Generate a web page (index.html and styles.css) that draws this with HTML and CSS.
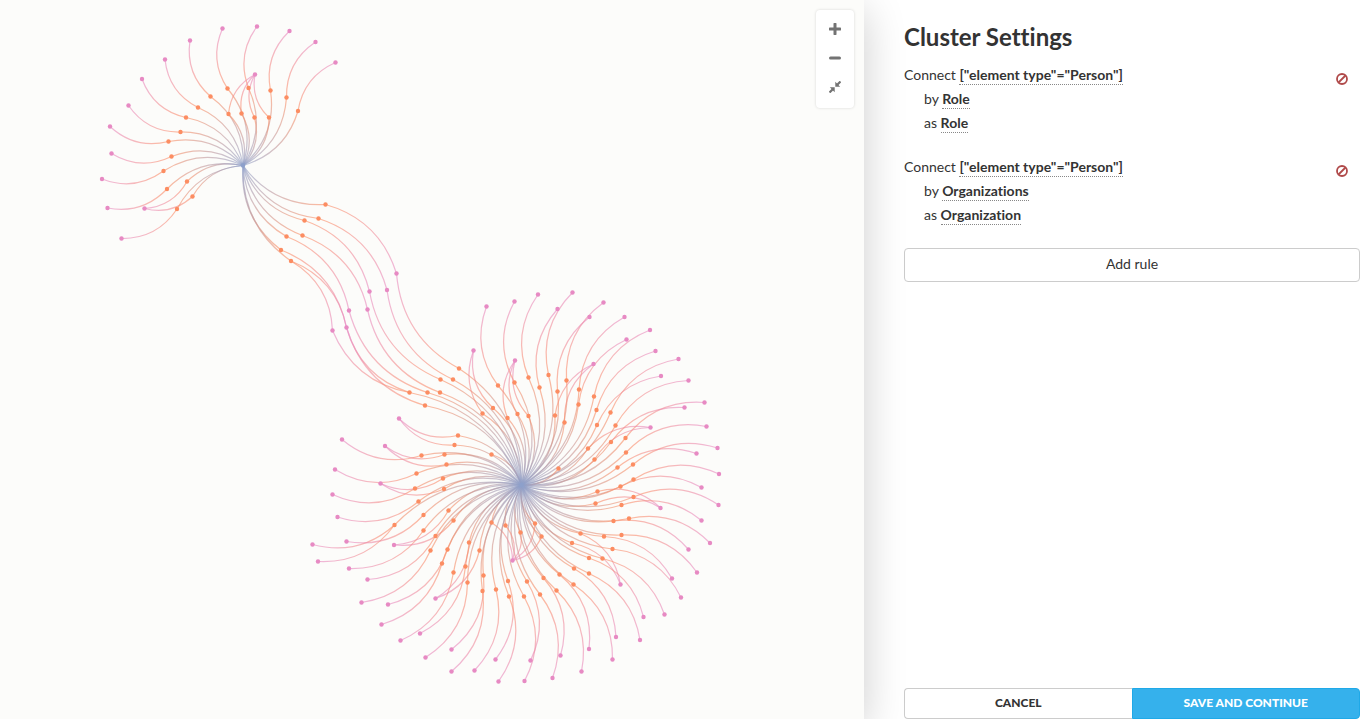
FILE: index.html
```html
<!DOCTYPE html>
<html lang="en">
<head>
<meta charset="utf-8">
<title>Cluster Settings</title>
<link rel="stylesheet" href="styles.css">
</head>
<body>
<main class="map">
  <svg class="graph" id="graph" role="img" aria-label="Relationship map"></svg>
  <div class="zoom-bar">
    <button class="zoom-button" type="button" aria-label="Zoom in">
      <svg viewBox="0 0 12 12" width="12" height="12"><path d="M6 1v10M1 6h10" stroke="currentColor" stroke-width="3" stroke-linecap="round"/></svg>
    </button>
    <button class="zoom-button" type="button" aria-label="Zoom out">
      <svg viewBox="0 0 12 12" width="12" height="12"><path d="M1.500 6h9" stroke="currentColor" stroke-width="3" stroke-linecap="round"/></svg>
    </button>
    <button class="zoom-button" type="button" aria-label="Fit to screen">
      <svg viewBox="0 0 12 12" width="12" height="12"><path d="M.5 11.500 4 8M11.500.5 8 4" stroke="currentColor" stroke-width="2.200"/><path d="M.8 6.300h4.900v4.900zM6.300.8v4.900h4.900z" fill="currentColor"/></svg>
    </button>
  </div>
</main>
<aside class="panel">
  <h1 class="title">Cluster Settings</h1>
  <section class="rule">
    <div class="rule-text">
      <p class="line">Connect <a class="value" href="#">["element type"=<wbr>"Person"]</a></p>
      <p class="line line-indent">by <a class="value" href="#">Role</a></p>
      <p class="line line-indent">as <a class="value" href="#">Role</a></p>
    </div>
    <button class="remove" type="button" aria-label="Remove rule">
      <svg viewBox="0 0 12 12" width="12" height="12" fill="none" stroke="currentColor" stroke-width="1.800"><circle cx="6" cy="6" r="5"/><path d="M2.500 9.500l7-7"/></svg>
    </button>
  </section>
  <section class="rule">
    <div class="rule-text">
      <p class="line">Connect <a class="value" href="#">["element type"=<wbr>"Person"]</a></p>
      <p class="line line-indent">by <a class="value" href="#">Organizations</a></p>
      <p class="line line-indent">as <a class="value" href="#">Organization</a></p>
    </div>
    <button class="remove" type="button" aria-label="Remove rule">
      <svg viewBox="0 0 12 12" width="12" height="12" fill="none" stroke="currentColor" stroke-width="1.800"><circle cx="6" cy="6" r="5"/><path d="M2.500 9.500l7-7"/></svg>
    </button>
  </section>
  <button class="add" type="button">Add rule</button>
  <div class="actions">
    <button class="action" type="button">CANCEL</button>
    <button class="action action-primary" type="button">SAVE AND CONTINUE</button>
  </div>
</aside>
<script src="graph.js"></script>
</body>
</html>
```
FILE: styles.css
```css
* {
  box-sizing: border-box;
}

body {
  margin: 0;
  display: flex;
  height: 100vh;
  overflow: hidden;
  background: #fff;
  color: #333;
  font-family: Lato, "Liberation Sans", sans-serif;
  font-size: 14px;
  font-variant-ligatures: none;
  line-height: 24px;
}

button {
  font: inherit;
  color: inherit;
  cursor: pointer;
}

.map {
  position: relative;
  flex: 1;
  min-width: 0;
  background: #fcfcfa;
  box-shadow: 0 10px 40px rgba(0, 0, 0, 0.2);
}

.graph {
  display: block;
  width: 100%;
  height: 100%;
}

.edge {
  fill: none;
  stroke-width: 1.25;
  stroke-opacity: 0.6;
}

.hub {
  fill: #8da0cb;
}

.role {
  fill: #fc8d62;
}

.person {
  fill: #e78ac3;
}

.zoom-bar {
  position: absolute;
  top: 10px;
  right: 10px;
  display: flex;
  flex-direction: column;
  padding: 4px 0 7px;
  background: #fff;
  border-radius: 4px;
  box-shadow: 0 0 3px rgba(0, 0, 0, 0.15);
}

.zoom-button {
  display: flex;
  align-items: center;
  justify-content: center;
  width: 38px;
  height: 29px;
  padding: 0;
  border: 0;
  background: none;
  color: #737373;
}

.panel {
  display: flex;
  flex-direction: column;
  width: 500px;
  padding: 20px 4px 0 40px;
}

.title {
  margin: 0 0 9px;
  font-size: 24px;
  line-height: 34px;
}

.rule {
  display: flex;
  align-items: flex-start;
  justify-content: space-between;
  margin-bottom: 20px;
  padding-right: 12px;
}

.line {
  margin: 0;
}

.line-indent {
  padding-left: 20px;
}

.value {
  padding-bottom: 1px;
  border-bottom: 1px dotted #888;
  color: inherit;
  font-weight: bold;
  text-decoration: none;
}

.remove {
  display: flex;
  margin-top: 10px;
  padding: 0;
  border: 0;
  background: none;
  color: #b04a4a;
}

.add {
  height: 34px;
  margin-top: 1px;
  padding: 0 0 2px;
  border: 1px solid #ccc;
  border-radius: 4px;
  background: #fff;
}

.actions {
  display: flex;
  margin-top: auto;
}

.action {
  flex: 1;
  height: 31px;
  padding: 0 0 2px;
  border: 1px solid #ccc;
  border-right: 0;
  border-radius: 4px 0 0 4px;
  background: #fff;
  font-size: 12px;
  font-weight: 900;
}

.action-primary {
  border: 1px solid #1fa9e8;
  border-radius: 0 4px 4px 0;
  background: #35b1ec;
  color: #fff;
}
```
FILE: graph.js
```js
const NS = "http://www.w3.org/2000/svg";
const COLORS = { hub: "#8da0cb", role: "#fc8d62", person: "#e78ac3" };
const BEND = 0.27;

// Each row: a person's x, y, followed by the x, y of every role they hold.
const clusters = [
  {
    hub: [243, 165.5],
    people: [
      [222.5, 28.5, 227.5, 88.5], [190, 40.5, 210.5, 96.5], [165, 59.5, 198, 107.5],
      [142, 79, 186, 117.5], [128.5, 105.5, 180.5, 132], [110, 126.5, 168.5, 141.5],
      [111.5, 153.5, 171.5, 156.5], [102, 179, 163.5, 171], [107.5, 208, 167, 189],
      [144.5, 208.5, 187, 181.5, 192.5, 196.5], [121.5, 238.5, 177, 209],
      [257, 26.5, 248.5, 88], [289.5, 31, 270.5, 90.5], [315.5, 42, 286.5, 97.5],
      [335.5, 62.5, 298, 111],
      [255, 74.5, 228.5, 114, 241.5, 113.5, 254.5, 117.5, 269, 117.5],
      [396.5, 273.5, 325.5, 204.5], [387, 290, 318.5, 218.5], [369.5, 291.5, 304.5, 220.5],
      [367.5, 309.5, 302.5, 235.5], [349, 310.5, 286.5, 236.5],
      [346.5, 327.5, 281, 250, 291, 261], [332.5, 330.5, 291, 261]
    ],
    loose: []
  },
  {
    hub: [521.5, 485],
    people: [
      [396.5, 273.5, 459, 368.5], [387, 290, 453, 379.5], [369.5, 291.5, 440.5, 379.5],
      [367.5, 309.5, 440, 392.5], [349, 310.5, 427.5, 392.5],
      [346.5, 327.5, 409.5, 392.5, 425, 405.5], [332.5, 330.5, 409.5, 392.5],
      [473.5, 350.5, 482.5, 413.5, 493, 408], [486.5, 306.5, 498, 385.5],
      [514.5, 301.5, 514.5, 382.5], [538, 294.5, 528.5, 377.5],
      [515, 360.5, 507.5, 418, 517.5, 414, 528.5, 416], [557.5, 309, 539.5, 387.5],
      [572.5, 292.5, 548.5, 375], [589.5, 317, 557.5, 391.5], [603.5, 302.5, 566.5, 380.5],
      [624.5, 317, 579, 389.5], [650, 330, 594, 396.5], [626.5, 339.5, 578.5, 404.5],
      [593.5, 364, 555, 415.5, 564.5, 422.5], [655.5, 351, 596.5, 410],
      [678.5, 359, 610.5, 412.5], [661, 376, 597, 425], [688.5, 380.5, 615.5, 425.5],
      [704.5, 402.5, 625.5, 438], [684.5, 407.5, 611, 442],
      [650.5, 427.5, 588, 448.5, 594.5, 459.5], [706.5, 426.5, 626, 452.5],
      [717.5, 448, 633, 464.5], [696.5, 453.5, 617.5, 467.5], [719, 474, 633.5, 479.5],
      [701.5, 487.5, 620.5, 486.5], [718.5, 505, 633.5, 497],
      [660.5, 508, 597.5, 491.5, 595.5, 503.5], [701.5, 520.5, 621.5, 505],
      [710, 543, 629, 518.5], [688.5, 549.5, 613.5, 521], [697, 572.5, 621.5, 535],
      [672, 578.5, 604, 536.5], [681, 597.5, 612.5, 549],
      [620.5, 584.5, 580.5, 533.5, 572, 543], [664.5, 614.5, 602.5, 558.5],
      [643.5, 617, 589, 558], [640, 640, 589, 573.5], [616, 637, 574, 568.5],
      [612.5, 659.5, 573.5, 584.5], [589, 649, 559.5, 574.5], [581.5, 671.5, 556.5, 590.5],
      [560.5, 655.5, 543.5, 578], [552.5, 678, 540, 594.5], [530.5, 660.5, 527, 581.5],
      [524.5, 681, 524, 596.5],
      [512.5, 560.5, 505.5, 525.5, 520.5, 532.5, 535, 523.5, 541.5, 536.5, 491.5, 522.5],
      [498.5, 681.5, 509, 596.5], [495.5, 659.5, 508, 581], [474.5, 670.5, 496, 589.5],
      [451.5, 671.5, 482.5, 591], [451.5, 649.5, 483.5, 575.5], [425.5, 657.5, 467.5, 582.5],
      [420, 633.5, 465.5, 566.5], [400.5, 640.5, 453.5, 572.5], [381.5, 624.5, 442, 563.5],
      [388, 604.5, 447.5, 549.5], [361.5, 602.5, 430.5, 550.5],
      [435.5, 598.5, 469, 542.5, 479.5, 550.5], [367.5, 579.5, 435.5, 536],
      [349, 568.5, 423.5, 530.5], [318, 561.5, 394.5, 525], [312.5, 544.5, 394.5, 525],
      [346.5, 541.5, 423.5, 515], [394, 545, 448.5, 510.5, 453.5, 520.5],
      [335, 469.5, 416.5, 473.5], [342, 439.5, 421.5, 455.5], [332.5, 494.5, 415, 488.5],
      [337.5, 517, 418.5, 501.5], [399, 418.5, 458, 435.5, 454.5, 445],
      [385, 446, 444.5, 454.5, 446.5, 464.5], [380.5, 483.5, 443, 478.5, 444, 489]
    ],
    loose: [[491.5, 454.5], [558.5, 468.5]]
  }
];

const graph = document.getElementById("graph");

function add(parent, name, attributes) {
  const element = document.createElementNS(NS, name);
  for (const key in attributes) element.setAttribute(key, attributes[key]);
  parent.appendChild(element);
  return element;
}

const defs = add(graph, "defs", {});
const edgeLayer = add(graph, "g", {});
const nodeLayer = add(graph, "g", {});
const seen = new Set();
let edgeCount = 0;

function drawEdge([x1, y1], [x2, y2], from, to) {
  const key = [x1, y1, x2, y2].join();
  if (seen.has(key)) return;
  seen.add(key);
  const id = "edge-" + edgeCount++;
  const gradient = add(defs, "linearGradient", { id, gradientUnits: "userSpaceOnUse", x1, y1, x2, y2 });
  add(gradient, "stop", { offset: 0, "stop-color": COLORS[from] });
  add(gradient, "stop", { offset: 1, "stop-color": COLORS[to] });
  const cx = (x1 + x2) / 2 - (y2 - y1) * BEND;
  const cy = (y1 + y2) / 2 + (x2 - x1) * BEND;
  add(edgeLayer, "path", { class: "edge", d: `M${x1} ${y1}Q${cx} ${cy} ${x2} ${y2}`, stroke: `url(#${id})` });
}

function drawNode([cx, cy], kind) {
  const key = [cx, cy].join();
  if (seen.has(key)) return;
  seen.add(key);
  add(nodeLayer, "circle", { class: kind, cx, cy, r: 2.2 });
}

for (const { hub, people, loose } of clusters) {
  for (const row of people) {
    const person = row.slice(0, 2);
    for (let i = 2; i < row.length; i += 2) {
      const role = row.slice(i, i + 2);
      drawEdge(person, role, "person", "role");
      drawEdge(hub, role, "hub", "role");
      drawNode(role, "role");
    }
    drawNode(person, "person");
  }
  for (const role of loose) {
    drawEdge(hub, role, "hub", "role");
    drawNode(role, "role");
  }
  drawNode(hub, "hub");
}
```
